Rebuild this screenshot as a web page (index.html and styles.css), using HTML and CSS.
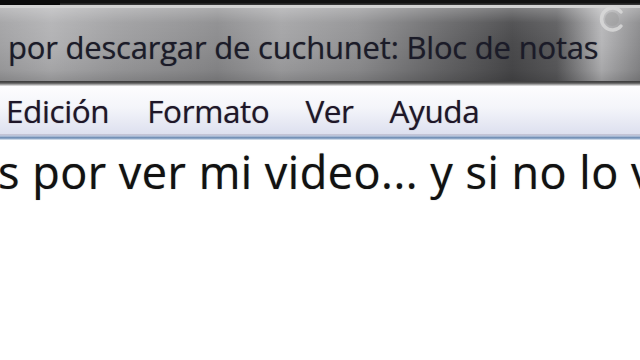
FILE: index.html
```html
<!DOCTYPE html>
<html lang="es">
<head>
<meta charset="utf-8">
<title>Bloc de notas</title>
<link rel="stylesheet" href="styles.css">
</head>
<body>
<div class="window">
  <div class="topstrip"><div class="topstrip-left"></div><div class="topstrip-right"></div></div>
  <div class="titlebar">
    <span class="title">por descargar de cuchunet: Bloc de notas</span>
    <svg class="watermark" width="30" height="30" viewBox="0 0 30 30" aria-hidden="true">
      <path d="M24 8 A11 11 0 1 0 24 22" fill="none" stroke="#d8d8d8" stroke-width="3.5" stroke-linecap="round" opacity="0.85"/>
      <circle cx="15" cy="15" r="7" fill="#9a9a9a" opacity="0.45"/>
    </svg>
  </div>
  <div class="titleedge"></div>
  <nav class="menubar">
    <span class="menu-item m-edit">Edición</span>
    <span class="menu-item m-format">Formato</span>
    <span class="menu-item m-view">Ver</span>
    <span class="menu-item m-help">Ayuda</span>
  </nav>
  <div class="editedge"></div>
  <div class="editor">
    <p class="line">s por ver mi video... y si no lo v</p>
  </div>
</div>
</body>
</html>
```

FILE: styles.css
```css
html, body {
  margin: 0;
  padding: 0;
  width: 640px;
  height: 360px;
  overflow: hidden;
  background: #fff;
}
.window {
  display: flex;
  flex-direction: column;
  width: 640px;
  height: 360px;
  font-family: "Open Sans", "Noto Sans", sans-serif;
}
.topstrip {
  display: flex;
  height: 5px;
}
.topstrip-left {
  width: 60px;
  background: #0a0a0a;
}
.topstrip-right {
  flex: 1;
  background: linear-gradient(180deg, #111 0%, #111 50%, #3e3e3e 100%);
}
.titlebar {
  position: relative;
  display: flex;
  align-items: center;
  border-top: 3px solid #d2d2d2;
  box-sizing: border-box;
  height: 76px;
  background:
    linear-gradient(180deg, rgba(255,255,255,0.28) 0%, rgba(255,255,255,0.06) 20%, rgba(0,0,0,0) 50%, rgba(0,0,0,0.08) 85%, rgba(0,0,0,0.18) 100%),
    linear-gradient(90deg, #a2a2a4 0%, #b2b2b4 8%, #a0a0a2 18%, #8c8c8e 34%, #a4a4a6 44%, #929294 56%, #6c6c6e 68%, #4a4a4c 80%, #5c5c5e 87%, #b6b6b8 94%, #8a8a8c 100%);
}
.title {
  font-size: 31px;
  color: #1b1b28;
  padding-left: 8px;
  letter-spacing: -0.2px;
  white-space: nowrap;
  margin-top: 4px;
  text-shadow: 0 0 1px rgba(20,20,40,0.5);
}
.watermark {
  position: absolute;
  left: 597px;
  top: -4px;
}
.titleedge {
  height: 5px;
  background: linear-gradient(180deg, #3a3a3a 0%, #555 40%, #a0a0a0 70%, #ececec 100%);
}
.menubar {
  display: flex;
  align-items: center;
  height: 48px;
  background: linear-gradient(180deg, #fdfdfe 0%, #f4f5fa 45%, #dde0ef 100%);
}
.menu-item {
  font-size: 31.5px;
  color: #1e1628;
  white-space: nowrap;
  letter-spacing: -0.4px;
  text-shadow: 0 0 1px rgba(30,20,40,0.5);
}
.m-edit { margin-left: 6px; }
.m-format { margin-left: 38px; }
.m-view { margin-left: 36px; }
.m-help { margin-left: 36px; }
.editedge {
  height: 6px;
  background: linear-gradient(180deg, #c7c3d3 0%, #b6c4dc 35%, #6f8db4 60%, #9fb6d2 85%, #ffffff 100%);
}
.editor {
  flex: 1;
  background: #fff;
  overflow: hidden;
}
.line {
  margin: 4px 0 0 -2px;
  font-size: 45px;
  line-height: 56px;
  color: #111;
  white-space: nowrap;
  letter-spacing: 0.5px;
  text-shadow: 0 0 1px rgba(0,0,0,0.5);
}
```
